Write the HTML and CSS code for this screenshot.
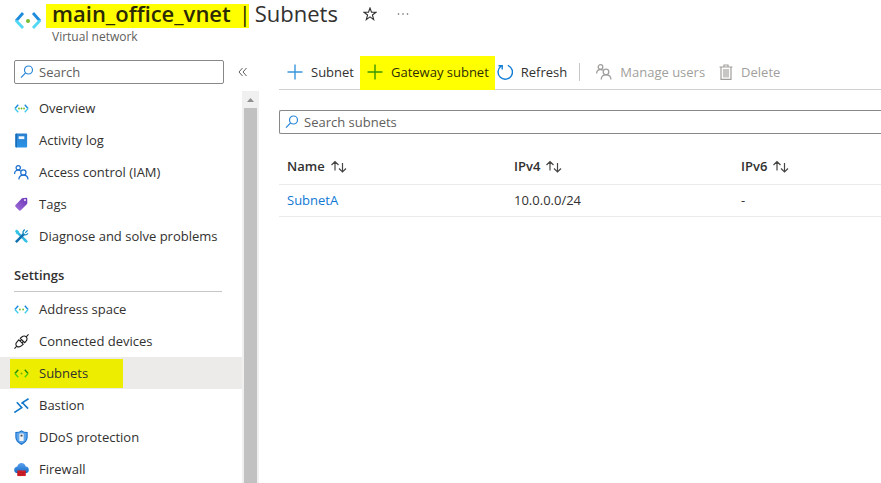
FILE: index.html
```html
<!DOCTYPE html>
<html lang="en">
<head>
<meta charset="utf-8">
<title>main_office_vnet | Subnets</title>
<link rel="stylesheet" href="styles.css">
</head>
<body>
<svg class="defs" aria-hidden="true">
  <defs>
    <linearGradient id="blue" x1="0" y1="0" x2="0" y2="1"><stop offset="0" stop-color="#5ea0ef"/><stop offset="1" stop-color="#0f6cc4"/></linearGradient>
    <linearGradient id="book" x1="0" y1="0" x2="0" y2="1"><stop offset="0" stop-color="#2a7fd0"/><stop offset="1" stop-color="#2b93e6"/></linearGradient>
    <linearGradient id="purple" x1="1" y1="0" x2="0" y2="1"><stop offset="0" stop-color="#6a35b8"/><stop offset="1" stop-color="#a06fd8"/></linearGradient>
    <symbol id="search" viewBox="0 0 14 14"><circle cx="8.5" cy="5" r="4" fill="none" stroke="#2b88d8" stroke-width="1.2"/><path d="M5.6 7.9 1 12.6" stroke="#2b88d8" stroke-width="1.3"/></symbol>
    <symbol id="plus" viewBox="0 0 16 16"><path d="M8 .5v15M.5 8h15" fill="none" stroke="currentColor" stroke-width="1.4"/></symbol>
    <symbol id="sort" viewBox="0 0 18 14"><path d="M5 10.500V1.500M1.500 5 5 1.500 8.500 5M12.500 3v9M9 8.500l3.500 3.500L16 8.500" fill="none" stroke="#484644" stroke-width="1.2"/></symbol>
    <symbol id="people" viewBox="0 0 16 16"><g fill="none" stroke="currentColor" stroke-width="1.300"><circle cx="4.500" cy="3" r="2.300"/><path d="M.6 9.500c0-2.500 1.600-4 3.900-4 1 0 1.800.3 2.500.8"/><circle cx="10" cy="8" r="2.800"/><path d="M5.200 15.500c0-2.900 1.800-4.700 4.800-4.700s4.900 1.800 4.900 4.700"/></g></symbol>
  </defs>
</svg>

<header class="header">
  <svg class="header-icon" viewBox="0 0 28 20" fill="none" stroke-width="2.800"><path d="M9 2 2 10" stroke="#1c8bdc"/><path d="M2 9.500 9 17" stroke="#50d8f4"/><path d="M19 2l7 8" stroke="#1c8bdc"/><path d="M26 9.500 19 17" stroke="#50d8f4"/><circle cx="14" cy="10" r="2" fill="#76bc2d"/></svg>
  <div class="header-text">
    <div class="title-row">
      <h1><mark class="title-mark">main_office_vnet<span class="bar">|</span></mark><span class="page">Subnets</span></h1>
      <button class="icon-button star" aria-label="Favorite"><svg width="14" height="14" viewBox="0 0 14 14"><path d="M7 1l1.500 4.300H13L9.400 8l1.300 4.600L7 9.900l-3.700 2.700L4.600 8 1 5.300h4.500z" fill="none" stroke="#323130" stroke-width="1.100"/></svg></button>
      <button class="icon-button" aria-label="More"><svg width="12" height="4" viewBox="0 0 12 4" fill="#605e5c"><circle cx="1.500" cy="2" r=".8"/><circle cx="6" cy="2" r=".8"/><circle cx="10.500" cy="2" r=".8"/></svg></button>
    </div>
    <p class="subtitle">Virtual network</p>
  </div>
</header>

<div class="body">
  <aside class="sidebar">
    <div class="side-search">
      <label class="field"><svg class="search-icon"><use href="#search"/></svg><input type="text" placeholder="Search" aria-label="Search"></label>
      <button class="icon-button" aria-label="Collapse menu"><svg width="10" height="10" viewBox="0 0 10 10" fill="none" stroke="#605e5c"><path d="M4.500 1 1 5l3.500 4M8.500 1 5 5l3.500 4"/></svg></button>
    </div>
    <div class="side-scroll">
      <nav class="menu">
        <a href="#"><svg class="mi" viewBox="0 0 16 16" fill="none" stroke-width="1.500"><path d="M4.500 4 1 8M11.500 4 15 8" stroke="#1c8bdc"/><path d="M1 8l3.500 4M15 8l-3.500 4" stroke="#45cdee"/><g fill="#76bc2d"><circle cx="5.300" cy="8" r="1"/><circle cx="8" cy="8" r="1"/><circle cx="10.700" cy="8" r="1"/></g></svg>Overview</a>
        <a href="#"><svg class="mi" viewBox="0 0 16 16"><rect x="1.500" y=".5" width="12.500" height="15" rx="1" fill="url(#book)"/><path d="M1.500 1v14l1.500.5V.5z" fill="#1767ad"/><rect x="5" y="3.500" width="6" height="3" fill="#f2f8fd"/></svg>Activity log</a>
        <a href="#"><svg class="mi people"><use href="#people"/></svg>Access control (IAM)</a>
        <a href="#"><svg class="mi" viewBox="0 0 16 16"><path d="M8.500 1.200 13 .8q1 0 1.100 1l.1 4.700q0 .6-.5 1.100l-6.500 6.600q-1 .9-1.900 0L1.600 10.300q-.8-.9 0-1.800z" fill="url(#purple)"/><circle cx="11.700" cy="3.200" r="1.200" fill="#e9dcf8"/></svg>Tags</a>
        <a href="#"><svg class="mi" viewBox="0 0 16 16" fill="none"><path d="M3 3l10 10" stroke="#32b5dc" stroke-width="2.600"/><path d="M1 2l2-1.500L5.500 3 5 5 3 5.500z" fill="#32c5e8"/><path d="M2 14 11 5" stroke="#0f6fb0" stroke-width="2.600"/><path d="M14.500 1.500 12 4M15 4.500q-2 3-5 1-1.500-2.500 1.500-5" stroke="#198fc5" stroke-width="1.300"/><path d="M10 12l3 3 2-2-3-2z" fill="#35c2e6"/></svg>Diagnose and solve problems</a>
        <h2>Settings</h2>
        <a href="#"><svg class="mi" viewBox="0 0 16 16" fill="none" stroke-width="1.500"><path d="M4.500 4 1 8M11.500 4 15 8" stroke="#1c8bdc"/><path d="M1 8l3.500 4M15 8l-3.500 4" stroke="#45cdee"/><g fill="#76bc2d"><circle cx="6.300" cy="8" r="1"/><circle cx="9.700" cy="8" r="1"/></g></svg>Address space</a>
        <a href="#"><svg class="mi" viewBox="0 0 16 16" fill="none" stroke="#201f1e" stroke-width="1.200"><path d="M.5 15.500 3 13M13 3 15.500.5"/><path d="M5.200 6.200 9.800 10.800 8.500 12.100Q5.500 15 3 13T3.900 7.500zM6.800 4.600 11.400 9.200 12.600 8Q15 5 13 3T8 3.400zM6.500 7.500 8 6M8.500 9.500 10 8"/></svg>Connected devices</a>
        <a href="#" class="selected" aria-current="page"><mark><svg class="mi" viewBox="0 0 16 16" fill="none" stroke-width="1.500"><path d="M4.500 4 1 8M11.500 4 15 8" stroke="#258b00"/><path d="M1 8l3.500 4M15 8l-3.500 4" stroke="#55d000"/><circle cx="8" cy="8" r="1" fill="#76b000"/></svg>Subnets</mark></a>
        <a href="#"><svg class="mi" viewBox="0 0 16 16" fill="none" stroke="#1177cb" stroke-width="1.700"><path d="M.3 15.500 8.300 10.300 3 4.500M15.500.8 9 5l6 6.300M11.500 3.300 8 6"/></svg>Bastion</a>
        <a href="#"><svg class="mi" viewBox="0 0 16 16"><path d="M8 .2q2.500 2 6.600 2v5.600q0 4.900-6.600 8.100-6.600-3.200-6.600-8.100V2.200q4.100 0 6.600-2z" fill="#1c73cc"/><path d="M8 1.700q2 1.500 5.400 1.600v4.500q0 3.900-5.400 6.700-5.400-2.800-5.400-6.700V3.300Q6 3.200 8 1.700z" fill="#5ca5ed"/><rect x="5.700" y="3.700" width="4.600" height="8" rx=".5" fill="#f2f2f2"/><path d="M7 5h2v2H7z" fill="#3f4b5b"/></svg>DDoS protection</a>
        <a href="#"><svg class="mi" viewBox="0 0 16 16"><path d="M3.800 12Q.2 11.500.2 8.500t3.300-3.600Q4.500 1 8 1t4.500 3.800q3.300.4 3.300 3.700t-3.500 3.500z" fill="url(#blue)"/><path d="M3.500 9h9v6h-9z" fill="#d71f2b"/><path d="M3.500 11h9M3.500 13h9M6.500 9v2M9.500 11v2M6.500 13v2" stroke="#a3171f" stroke-width=".6"/></svg>Firewall</a>
      </nav>
      <div class="scrollbar" aria-hidden="true"><svg class="up" viewBox="0 0 17 17"><path d="M5 11l3.500-4 3.500 4z" fill="#8f8f8f"/></svg><div class="thumb"></div></div>
    </div>
  </aside>

  <main class="main">
    <div class="toolbar">
      <button><svg class="ti plus"><use href="#plus"/></svg>Subnet</button>
      <button class="gateway"><svg class="ti"><use href="#plus"/></svg>Gateway subnet</button>
      <button class="refresh"><svg class="ti" viewBox="0 0 16 16" fill="none" stroke="#0f7cd6" stroke-width="1.400"><path d="M10.800 1.300A7.200 7.200 0 1 1 4 2.200M1.500 1.700h3.700v3.800"/></svg>Refresh</button>
      <span class="divider"></span>
      <button disabled><svg class="ti"><use href="#people"/></svg>Manage users</button>
      <button disabled><svg class="ti trash" viewBox="0 0 14 16" fill="none" stroke="#a19f9d" stroke-width="1.200"><path d="M.5 3h13M5 3V1h4v2M2 3v12.300h10V3"/><path d="M4.500 5.500h5v7.500h-5z" fill="#c8c6c4" stroke="#c8c6c4"/></svg>Delete</button>
    </div>
    <label class="field"><svg class="search-icon"><use href="#search"/></svg><input type="text" placeholder="Search subnets" aria-label="Search subnets"></label>
    <table>
      <thead><tr><th>Name<svg class="sort"><use href="#sort"/></svg></th><th>IPv4<svg class="sort"><use href="#sort"/></svg></th><th>IPv6<svg class="sort"><use href="#sort"/></svg></th></tr></thead>
      <tbody><tr><td><a href="#">SubnetA</a></td><td>10.0.0.0/24</td><td>-</td></tr></tbody>
    </table>
  </main>
</div>
</body>
</html>
```
FILE: styles.css
```css
* { box-sizing: border-box; }
body {
  margin: 0;
  height: 100vh;
  overflow: hidden;
  display: flex;
  flex-direction: column;
  background: #fff;
  color: #323130;
  font: 13px/18px "Segoe UI", "Open Sans", "Noto Sans", sans-serif;
}
.defs { position: absolute; width: 0; height: 0; }
button, input { font: inherit; color: inherit; }
button { border: 0; padding: 0; background: none; display: flex; align-items: center; white-space: nowrap; }
mark { color: inherit; background: #ff0; }
svg { flex: none; }

.header { display: flex; flex: none; height: 56px; padding-left: 14px; }
.header-icon { width: 28px; height: 20px; margin-top: 11px; }
.header-text { padding-left: 4px; }
.title-row { display: flex; align-items: center; height: 28px; }
h1 { display: flex; margin: 0; font-size: 22px; line-height: 26px; font-weight: 400; white-space: nowrap; }
.title-mark { display: flex; gap: 10px; height: 28px; padding-left: 6px; font-weight: 600; color: #2c2a05; background: linear-gradient(transparent 4px, #ff0 4px); }
.bar { display: flex; justify-content: center; width: 8px; font-weight: 400; }
.page { padding-left: 6px; }
.star { margin: 0 20px 0 25px; }
.subtitle { margin: 0; padding-left: 6px; font-size: 12px; line-height: 18px; color: #605e5c; }

.body { display: flex; flex: 1; min-height: 0; }
.sidebar { display: flex; flex-direction: column; width: 259px; flex: none; }
.side-search { display: flex; align-items: center; gap: 14px; flex: none; padding: 4px 0 0 14px; height: 28px; }
.field { display: flex; align-items: center; gap: 5px; height: 24px; padding-left: 5px; border: 1px solid #8a8886; border-radius: 2px; }
.side-search .field { width: 210px; }
.search-icon { width: 14px; height: 14px; }
.field input { flex: 1; min-width: 0; border: 0; padding: 0; outline: 0; background: none; }
.field input::placeholder { color: #605e5c; opacity: 1; }

.side-scroll { display: flex; flex: 1; min-height: 0; margin-top: 7px; }
.menu { flex: 1; overflow: hidden; padding-top: 1px; }
.menu a { display: flex; align-items: center; gap: 10px; height: 32px; padding-left: 14px; color: inherit; text-decoration: none; white-space: nowrap; }
.mi { width: 15px; height: 15px; }
.people { color: #1b6fd0; }
.menu h2 { margin: 6px 20px 1px 14px; height: 34px; border-bottom: 1px solid #c8c6c4; font-size: 13px; line-height: 34px; font-weight: 600; }
.menu .selected { padding-left: 10px; background: #edebe9; }
.selected mark { display: flex; align-items: center; gap: 10px; width: 113px; height: 29px; padding-left: 4px; background: #eded00; }
.scrollbar { display: flex; flex-direction: column; width: 17px; background: #f0f0f0; }
.up { width: 17px; height: 17px; }
.thumb { flex: 1; margin: 0 2px; background: #c1c1c1; }

.main { flex: 1; min-width: 0; padding-left: 20px; }
.toolbar { display: flex; height: 34px; border-bottom: 1px solid #d2d0ce; margin-bottom: 20px; }
.toolbar button { gap: 8px; padding: 0 6px 2px 8px; }
.ti { width: 16px; height: 16px; }
.trash { width: 14px; }
.plus { color: #3a96dd; }
.toolbar .gateway { padding-left: 7px; margin-bottom: -1px; background: #ff0; color: #2f2d05; }
.gateway .ti { color: #3a9600; }
.toolbar .refresh { padding-left: 2px; padding-right: 12px; }
.divider { width: 1px; height: 18px; margin: 7px 8px 0 0; background: #c8c6c4; }
.toolbar button:disabled { color: #a19f9d; }
.main > .field { border-right: 0; border-radius: 2px 0 0 2px; }
table { width: 100%; margin-top: 14px; border-collapse: collapse; table-layout: fixed; }
th, td { height: 32px; padding: 0 8px; border-bottom: 1px solid #edebe9; text-align: left; vertical-align: middle; }
th { height: 36px; font-weight: 600; }
th:nth-child(-n+2) { width: 227px; }
.sort { width: 18px; height: 14px; margin-left: 5px; vertical-align: -3px; }
td a { color: #0f78d4; text-decoration: none; }
```
